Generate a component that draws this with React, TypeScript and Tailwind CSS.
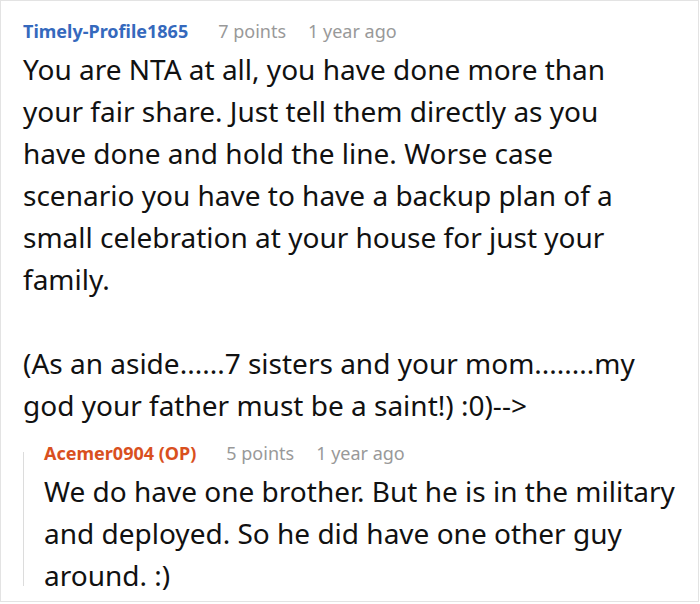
export default function App() {
  return (
    <div className="w-[700px] h-[604px] bg-white" style={{ fontFamily: '"Noto Sans", "Open Sans", sans-serif' }}>
      <div className="w-[699px] h-[602px] border border-[#e3e3e3] pl-[22px] pr-[48px] pt-[17px]">
        <div className="flex items-center gap-[30px] text-[18px] leading-[26px]">
          <span className="font-bold text-[#3569bd]">Timely-Profile1865</span>
          <span className="text-[#999]">7 points</span>
          <span className="text-[#999] -ml-[8px]">1 year ago</span>
        </div>
        <div className="text-[28px] leading-[42px] text-[#111] mt-[4px]">
          <p>
            You are NTA at all, you have done more than your fair share. Just tell them directly as you have done and
            hold the line. Worse case scenario you have to have a backup plan of a small celebration at your house for
            just your family.
          </p>
          <p className="mt-[42px]">
            (As an aside......7 sisters and your mom........my god your father must be a saint!) :0)--&gt;
          </p>
        </div>
        <div className="mt-[14px] -mr-[40px] flex gap-5">
          <div className="w-px bg-[#dcdcdc] mt-[12px] h-[134px] shrink-0" />
          <div className="flex-1">
            <div className="flex items-center gap-[30px] text-[18px] leading-[26px]">
              <span className="font-bold text-[#d9501e]">Acemer0904 (OP)</span>
              <span className="text-[#999]">5 points</span>
              <span className="text-[#999] -ml-[8px]">1 year ago</span>
            </div>
            <p className="text-[28px] leading-[42px] text-[#111] mt-[4px]">
              We do have one brother. But he is in the military and deployed. So he did have one other guy around. :)
            </p>
          </div>
        </div>
      </div>
    </div>
  );
}
